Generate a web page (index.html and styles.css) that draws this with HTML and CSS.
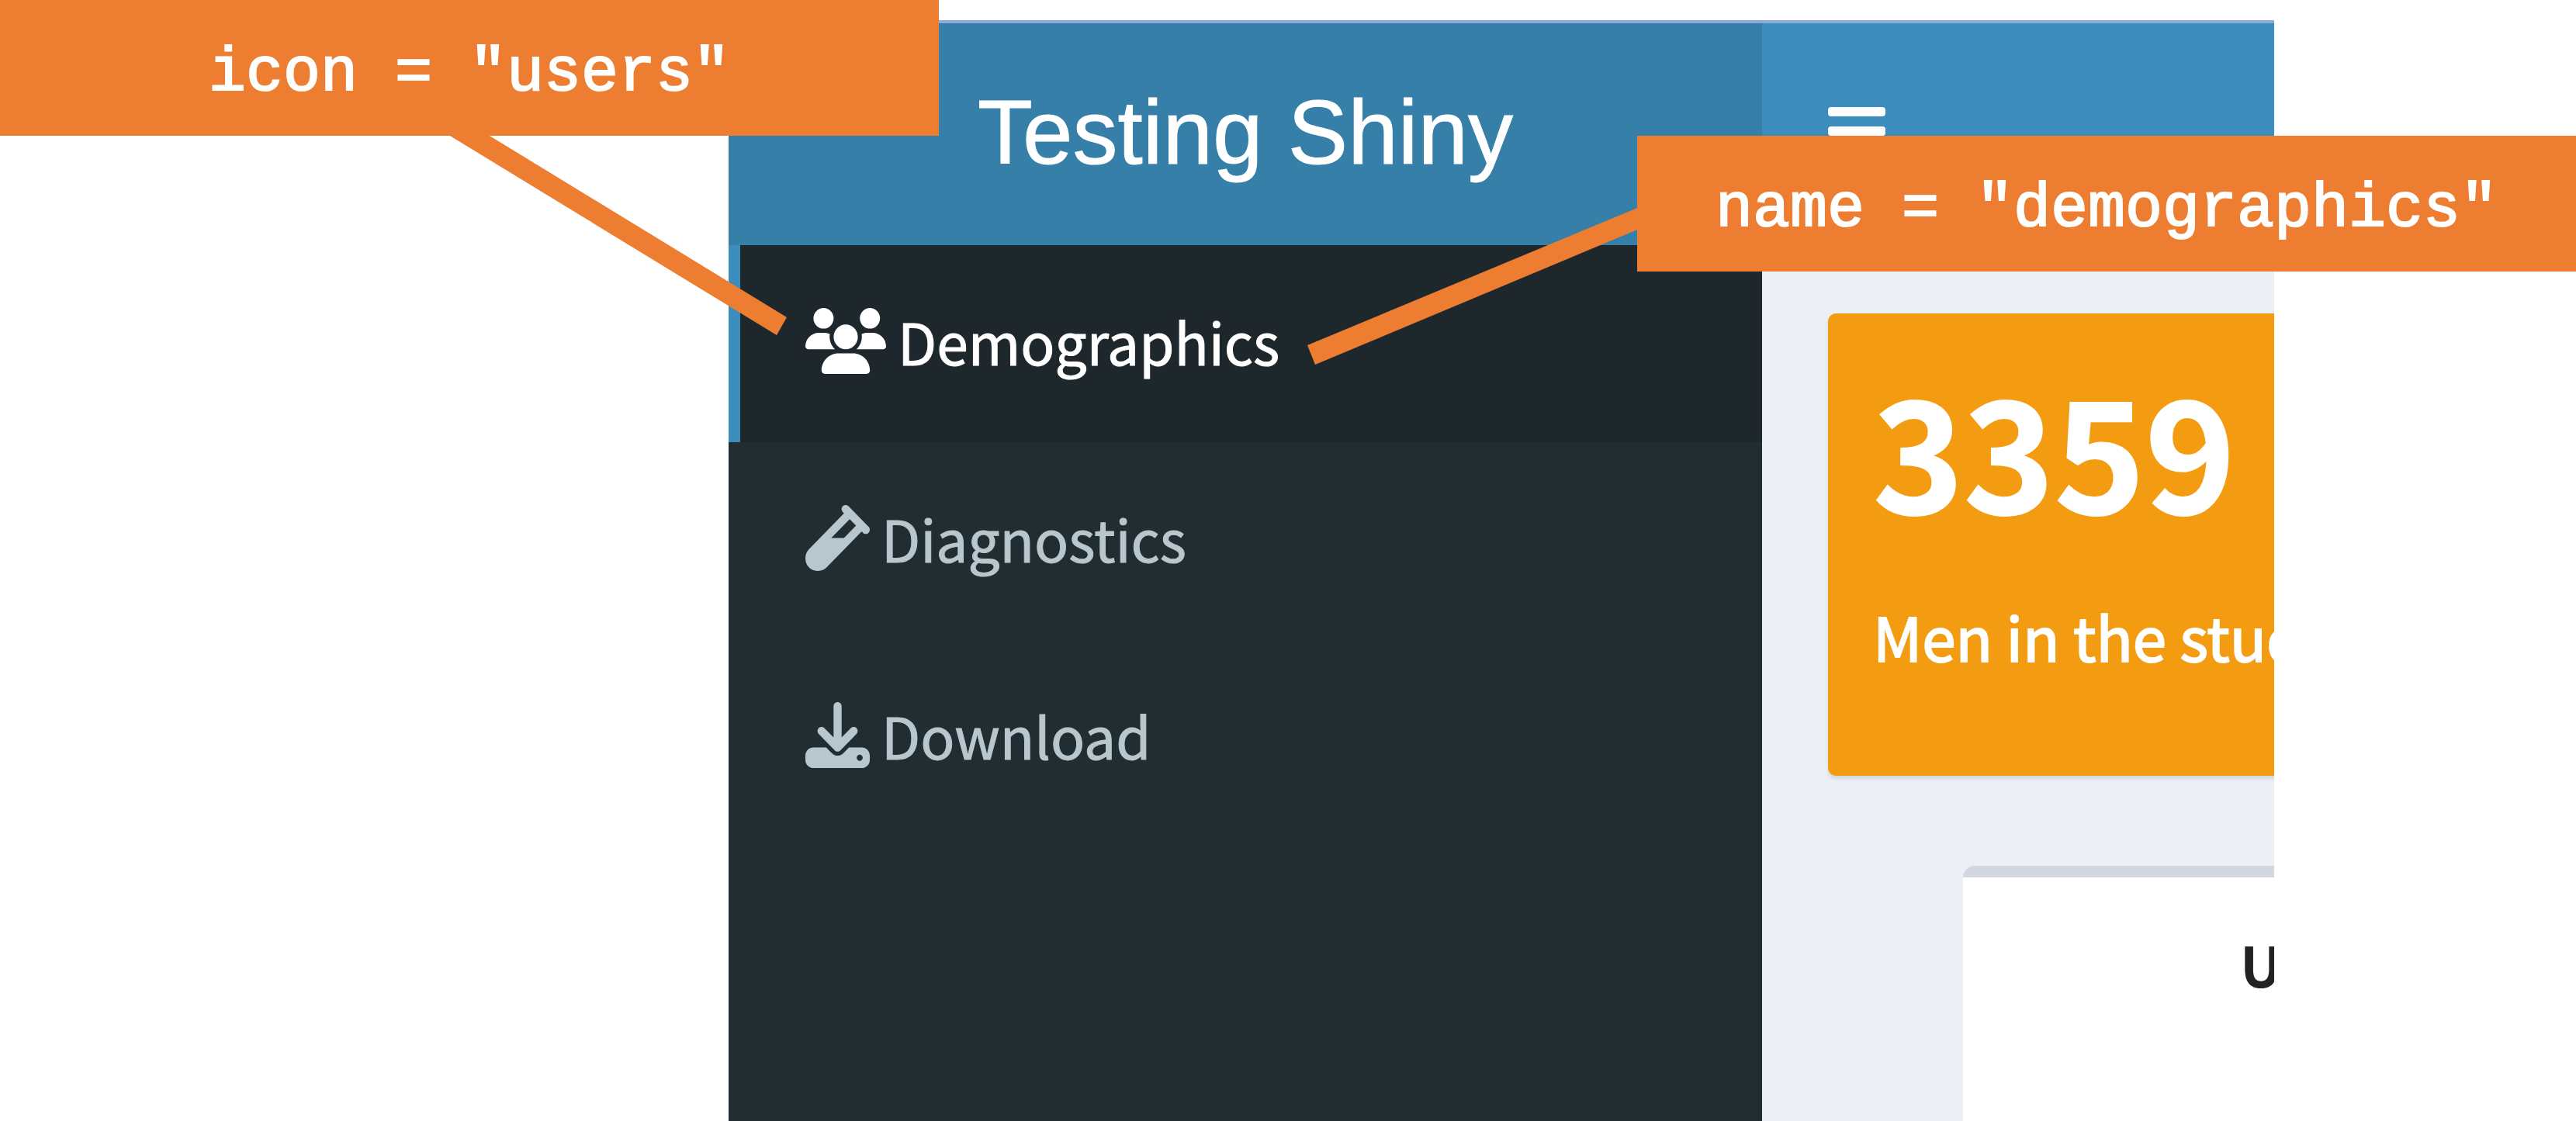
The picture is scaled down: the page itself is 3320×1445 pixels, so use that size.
FILE: index.html
```html
<!DOCTYPE html>
<html lang="en">
<head>
<meta charset="utf-8">
<title>Testing Shiny</title>
<link rel="stylesheet" href="styles.css">
</head>
<body>
<div class="figure">
  <div class="dashboard">
    <aside class="sidebar">
      <h1 class="logo">Testing Shiny</h1>
      <nav class="menu">
        <a class="menu-item active" href="#demographics">
          <svg class="icon icon-wide" viewBox="0 0 640 512" preserveAspectRatio="none" aria-hidden="true"><path d="M144 0a80 80 0 1 1 0 160A80 80 0 1 1 144 0zM512 0a80 80 0 1 1 0 160A80 80 0 1 1 512 0zM0 298.7C0 239.8 47.8 192 106.7 192h42.7c15.9 0 31 3.5 44.6 9.7c-1.3 7.2-1.9 14.7-1.9 22.3c0 38.2 16.8 72.5 43.3 96c-.2 0-.4 0-.7 0H21.3C9.6 320 0 310.4 0 298.7zM405.3 320c-.2 0-.4 0-.7 0c26.6-23.5 43.3-57.8 43.3-96c0-7.6-.7-15-1.9-22.3c13.6-6.3 28.7-9.7 44.6-9.7h42.7C592.2 192 640 239.8 640 298.7c0 11.8-9.6 21.3-21.3 21.3H405.3zM224 224a96 96 0 1 1 192 0 96 96 0 1 1 -192 0zM128 485.3C128 411.7 187.7 352 261.3 352H378.7C452.3 352 512 411.7 512 485.3c0 14.7-11.9 26.7-26.7 26.7H154.7c-14.7 0-26.7-11.9-26.7-26.7z"/></svg>
          <span>Demographics</span>
        </a>
        <a class="menu-item" href="#diagnostics">
          <svg class="icon" viewBox="0 0 512 512" preserveAspectRatio="none" aria-hidden="true"><path d="M342.6 9.4c-12.5-12.5-32.8-12.5-45.3 0s-12.5 32.8 0 45.3l9.4 9.4L28.1 342.6C10.1 360.6 0 385 0 410.5L0 416c0 53 43 96 96 96l5.5 0c25.5 0 49.9-10.1 67.9-28.1L448 205.3l9.4 9.4c12.5 12.5 32.8 12.5 45.3 0s12.5-32.8 0-45.3l-32-32-96-96-32-32zM205.3 256L352 109.3 402.7 160l-96 96-101.5 0z"/></svg>
          <span>Diagnostics</span>
        </a>
        <a class="menu-item" href="#download">
          <svg class="icon" viewBox="0 0 512 512" preserveAspectRatio="none" aria-hidden="true"><path d="M448 352h-101.5l-45.25 45.25C289.2 409.3 273.1 416 256 416s-33.16-6.656-45.25-18.75L165.5 352H64c-35.3 0-64 28.7-64 64v32c0 35.3 28.7 64 64 64h384c35.3 0 64-28.7 64-64v-32C512 380.7 483.3 352 448 352zM432 456c-13.2 0-24-10.8-24-24c0-13.2 10.8-24 24-24s24 10.8 24 24C456 445.2 445.2 456 432 456zM233.4 374.6C239.6 380.9 247.8 384 256 384s16.38-3.125 22.62-9.375l128-128c12.49-12.5 12.49-32.75 0-45.25c-12.5-12.5-32.76-12.5-45.25 0L288 274.8V32c0-17.67-14.33-32-32-32C238.3 0 224 14.33 224 32v242.8L150.6 201.4c-12.49-12.5-32.75-12.5-45.25 0c-12.49 12.5-12.49 32.75 0 45.25L233.4 374.6z"/></svg>
          <span>Download</span>
        </a>
      </nav>
    </aside>
    <div class="main">
      <header class="navbar">
        <button class="toggle" type="button" aria-label="Toggle navigation">
          <span class="bar"></span><span class="bar"></span><span class="bar"></span>
        </button>
      </header>
      <main class="content">
        <section class="value-box">
          <strong class="value">3359</strong>
          <p class="caption">Men in the study</p>
        </section>
        <section class="box">
          <h2 class="box-title">U</h2>
        </section>
      </main>
    </div>
  </div>

  <svg class="connectors" viewBox="0 0 3320 500" aria-hidden="true">
    <path d="M575 172L626 172L1014 409L1001 432Z"/>
    <path d="M2120 264L2120 292L1695 470L1685 445Z"/>
  </svg>
  <code class="callout callout-icon">icon = "users"</code>
  <code class="callout callout-name">name = "demographics"</code>
</div>
</body>
</html>
```
FILE: styles.css
```css
* {
  box-sizing: border-box;
}

body {
  margin: 0;
  background: #fff;
  font-family: "Noto Sans CJK SC", "Noto Sans", sans-serif;
}

.figure {
  position: relative;
  display: grid;
  grid-template-columns: 939fr 1992fr 389fr;
  min-height: 100vh;
  padding-top: 26px;
  overflow: hidden;
}

.dashboard {
  grid-column: 2;
  display: grid;
  grid-template-columns: 1332fr 660fr;
  border-top: 4px solid #8ea9db;
  overflow: hidden;
}

.sidebar {
  background: #222d32;
}

.logo {
  display: flex;
  align-items: center;
  justify-content: center;
  height: 286px;
  margin: 0;
  padding-bottom: 4px;
  background: #367fa9;
  color: #fff;
  font: 400 116px/1 "Liberation Sans", Arial, sans-serif;
  -webkit-text-stroke: 1px #fff;
}

.menu-item {
  display: flex;
  align-items: center;
  gap: 15px;
  height: 254px;
  padding: 0 84px 8px;
  border-left: 15px solid transparent;
  color: #b8c7ce;
  font-size: 73px;
  line-height: 80px;
  text-decoration: none;
  -webkit-text-stroke: 1px currentColor;
}

.menu-item.active {
  border-left-color: #3c8dbc;
  background: #1e282c;
  color: #fff;
}

.icon {
  flex: none;
  width: 83px;
  height: 85px;
  fill: currentColor;
}

.icon-wide {
  width: 104px;
}

.main {
  min-width: 0;
  background: #ecf0f5;
}

.navbar {
  display: flex;
  align-items: center;
  height: 286px;
  padding: 0 85px 8px;
  background: #3c8dbc;
}

.toggle {
  display: grid;
  gap: 13px;
  width: 74px;
  padding: 0;
  border: 0;
  background: none;
}

.bar {
  height: 12px;
  border-radius: 4px;
  background: #fff;
}

.content {
  display: grid;
  gap: 116px;
  padding: 88px 0 0 85px;
}

.value-box {
  display: flex;
  flex-direction: column;
  gap: 83px;
  height: 596px;
  padding: 52px 58px;
  border-radius: 10px 0 0 10px;
  background: #f39c12;
  box-shadow: 0 4px 4px rgba(0, 0, 0, 0.1);
  color: #fff;
  white-space: nowrap;
}

.value {
  font-size: 198px;
  line-height: 240px;
  -webkit-text-stroke: 2px #fff;
}

.caption {
  margin: 0;
  font-size: 78px;
  line-height: 80px;
  -webkit-text-stroke: 2px #fff;
}

.box {
  min-height: 330px;
  margin-left: 174px;
  padding: 66px 0 0 357px;
  border-top: 15px solid #d2d6de;
  border-radius: 15px 0 0 0;
  background: #fff;
  color: #222;
  white-space: nowrap;
}

.box-title {
  margin: 0;
  font-size: 72px;
  line-height: 90px;
}

.connectors {
  position: absolute;
  top: 0;
  left: 0;
  width: 100%;
  fill: #ed7d31;
}

.callout {
  position: absolute;
  display: flex;
  align-items: center;
  justify-content: center;
  width: 1210px;
  height: 175px;
  padding-top: 14px;
  background: #ed7d31;
  color: #fff;
  font: 400 80px/1 "Liberation Mono", "Courier New", monospace;
  -webkit-text-stroke: 2px #fff;
  white-space: pre;
}

.callout-icon {
  top: 0;
  left: 0;
}

.callout-name {
  top: 175px;
  right: 0;
}
```
